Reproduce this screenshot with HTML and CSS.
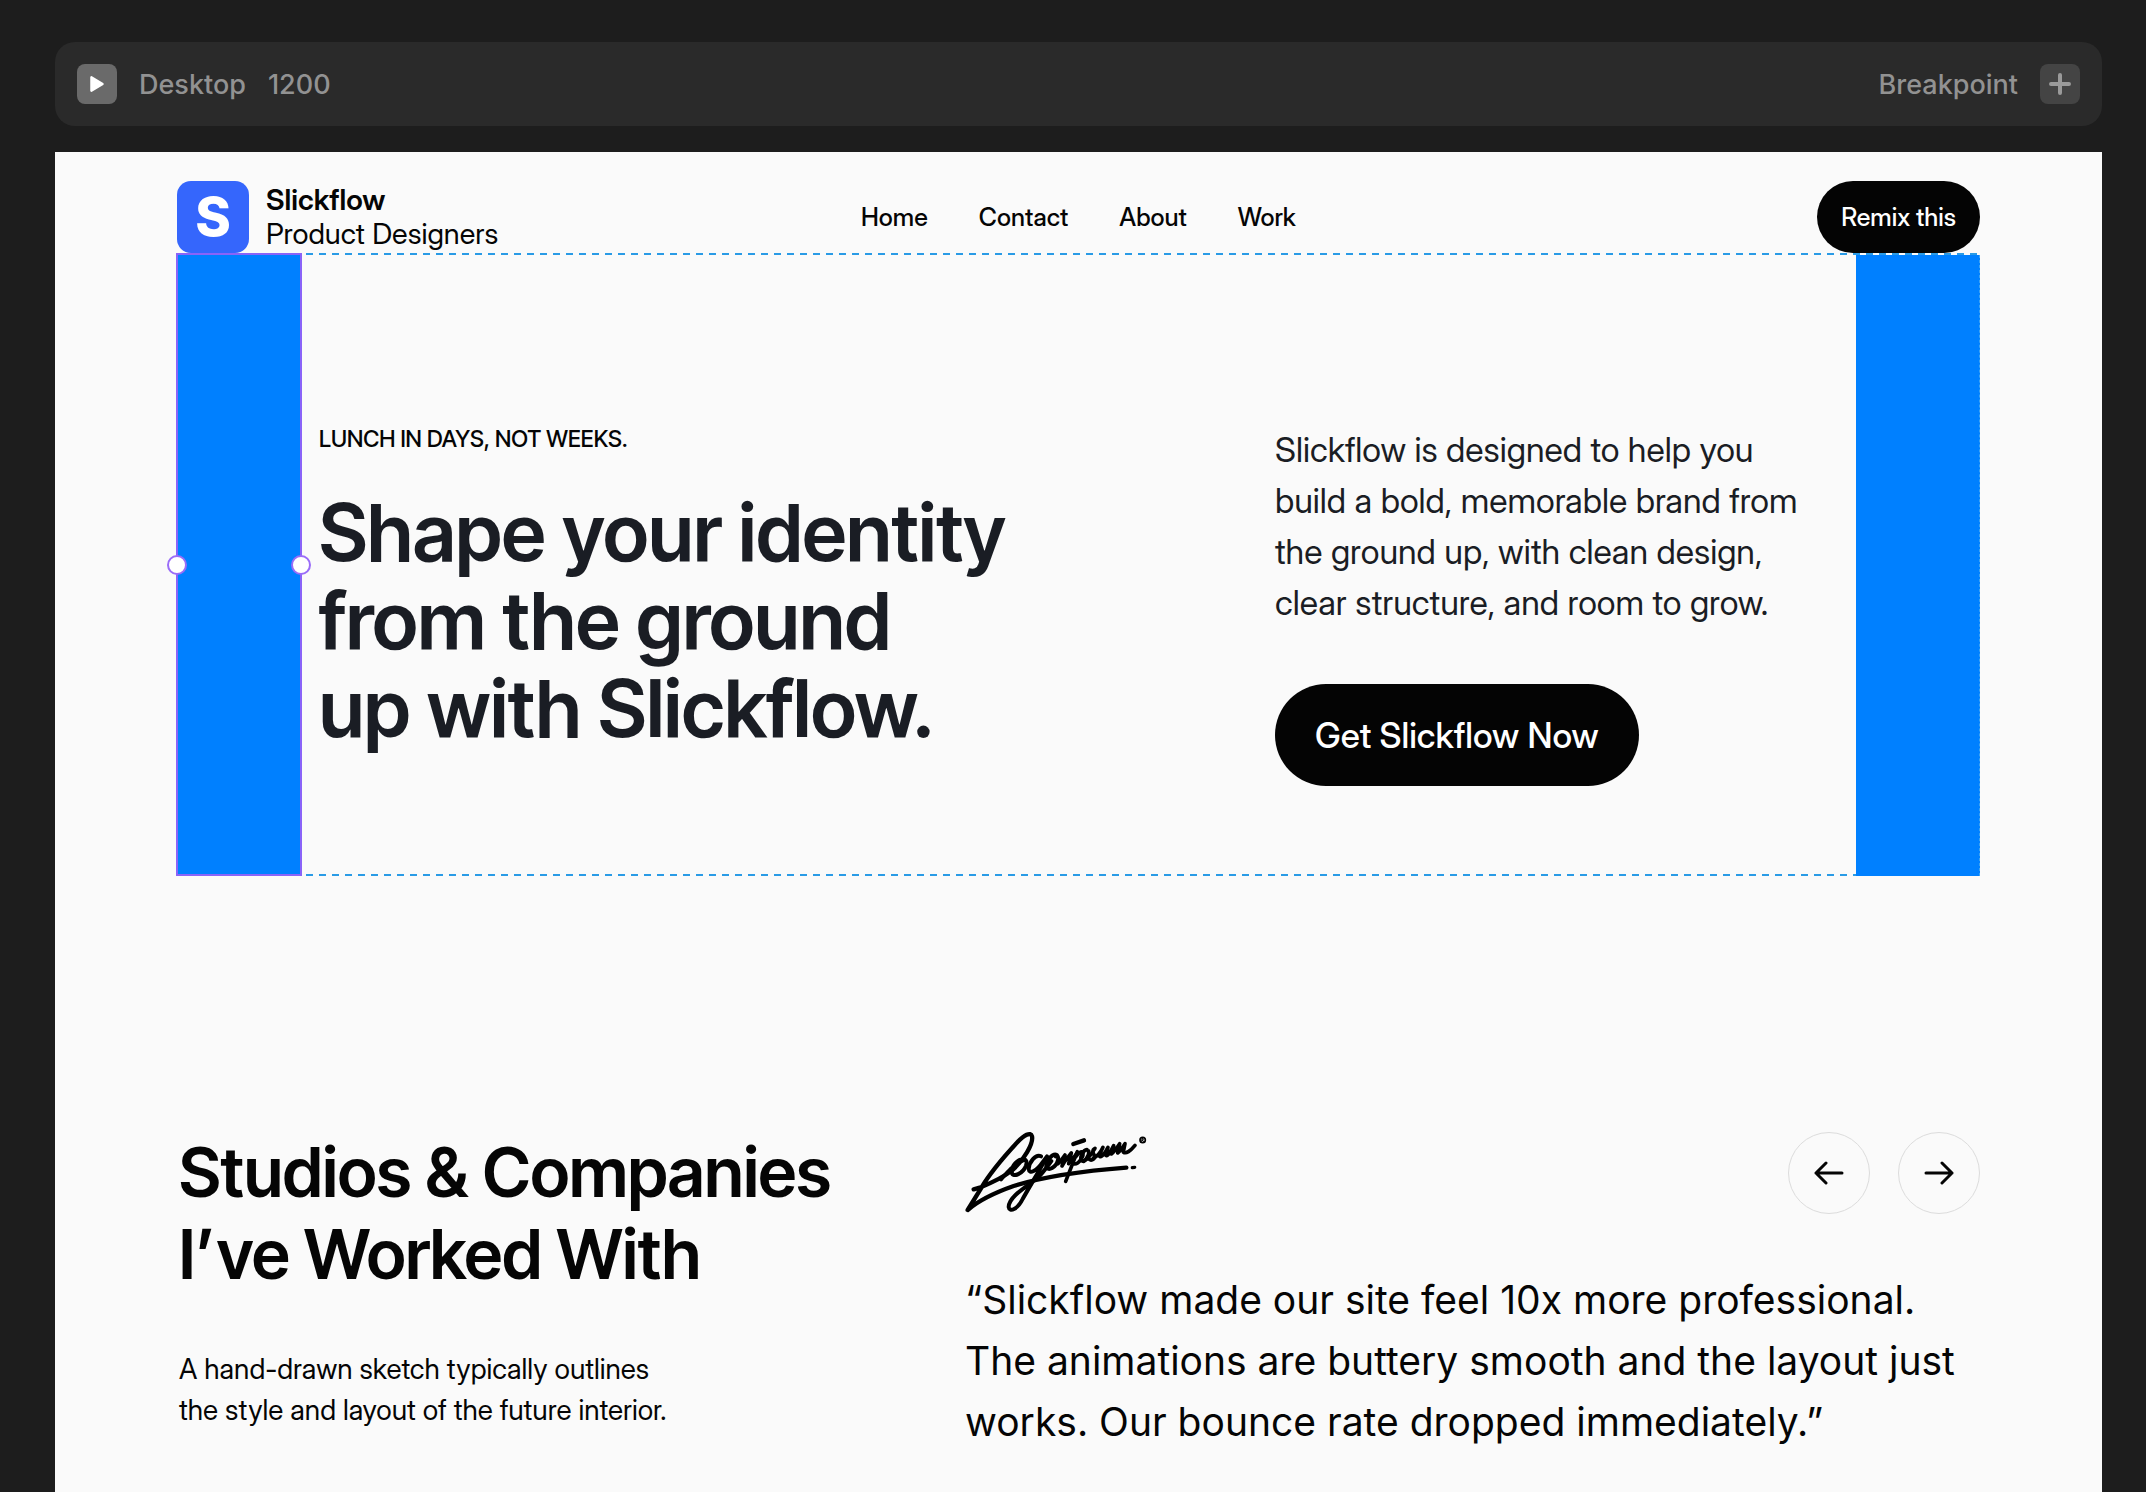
FILE: index.html
```html
<!DOCTYPE html>
<html lang="en">
<head>
<meta charset="utf-8">
<meta name="viewport" content="width=device-width, initial-scale=1">
<title>Slickflow</title>
<link rel="stylesheet" href="styles.css">
</head>
<body>
<div class="toolbar">
  <button class="tool tool-play" type="button" aria-label="Preview">
    <svg width="16" height="18" viewBox="0 0 14 16"><path d="M2 2v12l10-6z" fill="#fff" stroke="#fff" stroke-width="2" stroke-linejoin="round"/></svg>
  </button>
  <span class="tool-label">Desktop</span>
  <span class="tool-size">1200</span>
  <span class="tool-label tool-right" id="bp">Breakpoint</span>
  <button class="tool tool-add" type="button" aria-labelledby="bp">
    <svg width="22" height="22" viewBox="0 0 22 22"><path d="M11 2v18M2 11h18" stroke="#9a9a9a" stroke-width="4" stroke-linecap="round"/></svg>
  </button>
</div>

<div class="canvas">
  <header class="site-header">
    <a class="brand" href="#">
      <span class="brand-mark">S</span>
      <span class="brand-text"><strong>Slickflow</strong><span>Product Designers</span></span>
    </a>
    <nav class="nav">
      <a href="#">Home</a><a href="#">Contact</a><a href="#">About</a><a href="#">Work</a>
    </nav>
    <button class="pill pill-small" type="button">Remix this</button>
  </header>

  <section class="hero">
    <div class="strip strip-selected"><i class="handle handle-start"></i><i class="handle handle-end"></i></div>
    <div class="hero-body">
      <div class="hero-lead">
        <p class="eyebrow">LUNCH IN DAYS, NOT WEEKS.</p>
        <h1>Shape your identity<br>from the ground<br>up with Slickflow.</h1>
      </div>
      <div class="hero-side">
        <p>Slickflow is designed to help you<br>build a bold, memorable brand from<br>the ground up, with clean design,<br>clear structure, and room to grow.</p>
        <button class="pill pill-large" type="button">Get Slickflow Now</button>
      </div>
    </div>
    <div class="strip"></div>
  </section>

  <section class="clients">
    <div>
      <h2>Studios &amp; Companies<br>I’ve Worked With</h2>
      <p class="note">A hand-drawn sketch typically outlines<br>the style and layout of the future interior.</p>
    </div>
    <div>
      <div class="clients-bar">
        <svg class="signature" width="184" height="84" viewBox="14 18 552 252" role="img" aria-label="Logoipsum" fill="none" stroke="#000" stroke-linecap="round" stroke-linejoin="round">
          <path d="M40 193L58 188C88 176 128 158 158 134C190 105 220 56 215 34C211 19 191 31 171 52C132 94 89 144 62 190L22 255C60 222 106 202 160 183C240 158 340 140 498 128" stroke-width="13"/>
          <g stroke-width="12">
            <path d="M122 163C133 151 143 140 152 131"/>
            <path d="M190 104C174 99 152 124 154 143C158 160 188 145 197 122C202 106 194 100 186 107"/>
            <path d="M242 94C226 86 206 112 205 132C206 149 230 137 246 113L260 94C243 127 211 179 187 222C172 253 147 263 145 246C145 216 196 186 228 162C248 144 260 126 273 108"/>
            <path d="M290 90C276 84 257 107 258 124C262 142 288 126 293 105C295 96 292 90 286 94"/>
          </g>
          <g stroke-width="11">
            <path d="M293 116C303 106 309 98 314 90L305 123C314 107 325 94 333 84L325 116C335 105 343 94 350 84"/>
            <path d="M351 80L316 169M336 113C345 92 362 75 367 82C372 92 356 118 342 117"/>
            <path d="M380 74C368 75 357 98 364 107C373 113 388 89 385 78"/>
            <path d="M370 109C386 101 397 82 404 70C394 75 398 84 402 91C405 104 391 109 385 101"/>
            <path d="M398 101C415 92 423 78 428 67L418 88C415 104 432 91 443 67L436 88C438 101 450 82 460 62L453 87C462 80 470 68 478 56L472 84C481 77 487 67 494 56L489 81C497 88 510 78 524 61"/>
          </g>
          <path d="M339 57L371 46" stroke-width="13"/>
          <path d="M516 128L523 127" stroke-width="10"/>
          <circle cx="547" cy="45" r="8" stroke-width="5"/>
          <path d="M544 49L545 41C551 39 551 45 545 45L550 49" stroke-width="3"/>
        </svg>
        <div class="arrows">
          <button type="button" aria-label="Previous"><svg width="30" height="24" viewBox="0 0 30 24"><path d="M28 12H2M12 2L2 12l10 10"/></svg></button>
          <button type="button" aria-label="Next"><svg width="30" height="24" viewBox="0 0 30 24"><path d="M2 12h26M18 2l10 10-10 10"/></svg></button>
        </div>
      </div>
      <blockquote>“Slickflow made our site feel 10x more professional.<br>The animations are buttery smooth and the layout just<br>works. Our bounce rate dropped immediately.”</blockquote>
    </div>
  </section>
</div>
</body>
</html>
```
FILE: styles.css
```css
* { box-sizing: border-box; }

body {
  margin: 0;
  min-height: 100vh;
  padding: 42px 44px 0 55px;
  display: flex;
  flex-direction: column;
  background: #1d1d1d;
  font-family: "Inter", sans-serif;
  white-space: nowrap;
}

h1, h2, p, blockquote { margin: 0; }
a { color: inherit; text-decoration: none; }
button { border: 0; padding: 0; font: inherit; cursor: pointer; }
svg { display: block; }

/* Editor toolbar */
.toolbar {
  display: flex;
  align-items: center;
  gap: 22px;
  height: 84px;
  padding: 0 22px;
  border-radius: 20px;
  background: #2a2a2a;
  color: #929292;
  font-size: 27px;
  font-weight: 500;
}
.tool {
  display: grid;
  place-items: center;
  width: 40px;
  height: 40px;
  border-radius: 8px;
}
.tool-play { background: #6a6a6a; }
.tool-add { background: #444; }
.tool-right { margin-left: auto; }

/* Page canvas */
.canvas {
  flex: 1;
  margin-top: 26px;
  padding: 29px 122px 0 121px;
  background: #fafafa;
  color: #050505;
}

.site-header {
  display: grid;
  grid-template-columns: 1fr auto 1fr;
  align-items: center;
  height: 72px;
  padding-left: 1px;
}
.brand {
  display: flex;
  align-items: center;
  gap: 17px;
  font: 400 29px/34px "Inter Display", "Inter", sans-serif;
}
.brand-mark {
  display: grid;
  place-items: center;
  width: 72px;
  height: 72px;
  border-radius: 14px;
  background: #3566fc;
  color: #fff;
  font: 800 54px/72px "Inter", sans-serif;
}
.brand-text { display: grid; }
.brand-text strong { font-weight: 600; }
.nav {
  display: flex;
  gap: 51px;
  font: 500 25px/28px "Inter Display", "Inter", sans-serif;
}

.pill {
  border-radius: 51px;
  background: #040404;
  color: #fff;
  font: 500 35px/40px "Inter Display", "Inter", sans-serif;
}
.pill-small {
  justify-self: end;
  height: 72px;
  padding: 0 24px;
  font-size: 25px;
}
.pill-large {
  height: 102px;
  margin-top: 56px;
  padding: 0 40px;
}

/* Hero with its layout guides */
.hero {
  display: grid;
  grid-template-columns: 126px 1fr 124px;
  background:
    repeating-linear-gradient(90deg, #2a9be6 0 7px, transparent 7px 13px) 0 0 / 100% 2px no-repeat,
    repeating-linear-gradient(90deg, #2a9be6 0 7px, transparent 7px 13px) 0 100% / 100% 2px no-repeat;
}
.strip {
  margin-top: 2px;
  border-right: 1px dashed #3fa4f5;
  background: #0080ff;
}
.strip-selected {
  position: relative;
  margin-top: 0;
  border: 2px solid #8a63f8;
}
.handle {
  position: absolute;
  top: 50%;
  width: 20px;
  height: 20px;
  border: 2px solid #9a6cf8;
  border-radius: 50%;
  background: #fff;
  transform: translateY(-50%);
}
.handle-start { left: -11px; }
.handle-end { right: -11px; }

.hero-body {
  display: grid;
  grid-template-columns: 956fr 581fr;
  padding: 170px 0 90px 17px;
  color: #1a1d24;
}
.eyebrow {
  margin-bottom: 33px;
  color: #050505;
  font: 500 23px/32px "Inter Tight", "Inter", sans-serif;
}
h1 { font: 600 79px/88px "Inter Tight", "Inter", sans-serif; }
.hero-side { padding-top: 1px; }
.hero-side p { font: 400 34px/51px "Inter Display", "Inter", sans-serif; }

/* Clients */
.clients {
  display: grid;
  grid-template-columns: 786fr 1015fr;
  padding: 255px 0 56px 3px;
}
h2 { font: 600 68px/82px "Inter Tight", "Inter", sans-serif; }
.note {
  margin-top: 54px;
  font: 400 28px/41px "Inter Display", "Inter", sans-serif;
}
.clients-bar {
  display: flex;
  justify-content: space-between;
  align-items: center;
  margin-bottom: 54px;
}
.arrows { display: flex; gap: 28px; }
.arrows button {
  display: grid;
  place-items: center;
  width: 82px;
  height: 82px;
  border: 1px solid #dcdcdc;
  border-radius: 50%;
  background: transparent;
}
.arrows path {
  fill: none;
  stroke: #050505;
  stroke-width: 3;
  stroke-linecap: round;
  stroke-linejoin: round;
}
blockquote { font-size: 39px; line-height: 61px; }
```
